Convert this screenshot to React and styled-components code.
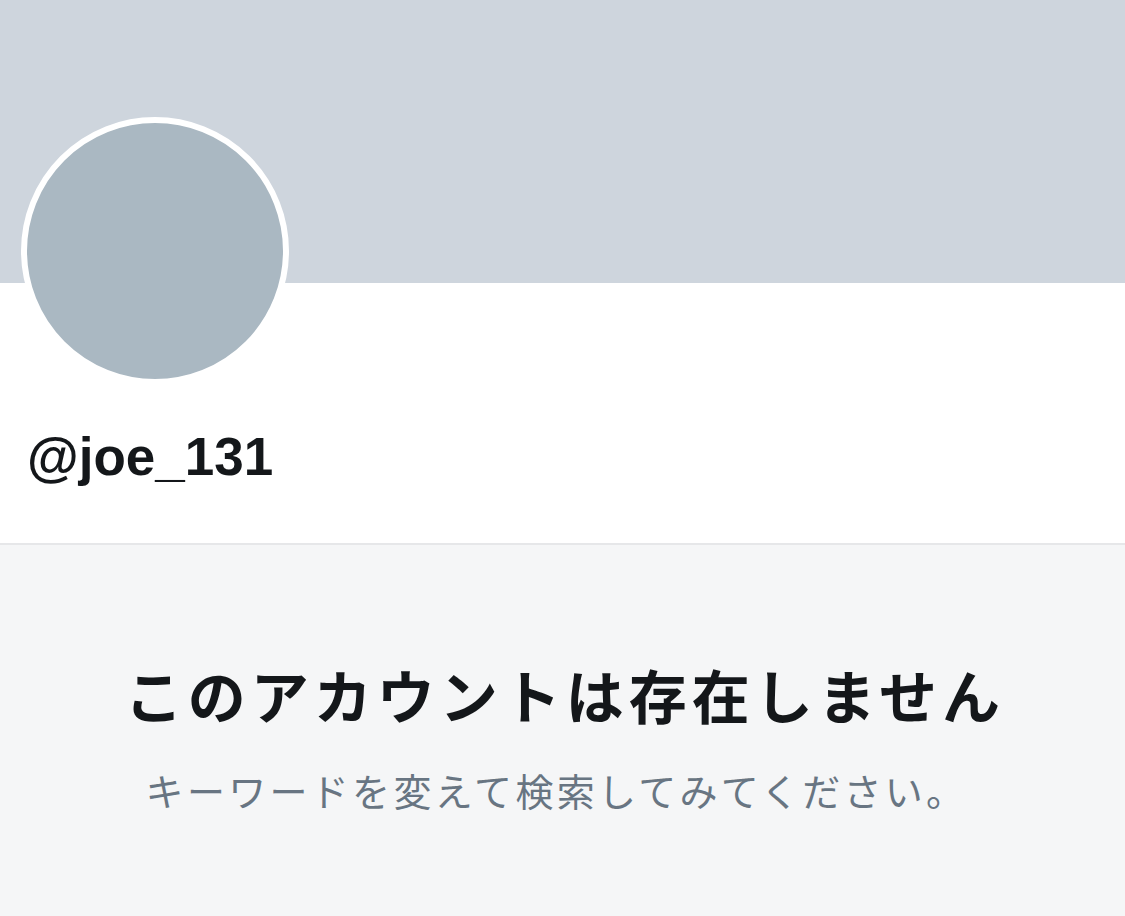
import React from "react";
import styled, { createGlobalStyle } from "styled-components";

const GlobalStyle = createGlobalStyle`
    html, body {
        margin: 0;
        padding: 0;
        background: #F5F6F7;
    }
    body {
        font-family: "Liberation Sans", "Noto Sans CJK JP", sans-serif;
        color: #14171A;
    }
`;

const StyledPage = styled.div`
    display: flex;
    flex-direction: column;
    width: 100%;
    min-height: 916px;
    background: #F5F6F7;
`;

const StyledHeader = styled.div`
    display: flex;
    flex-direction: column;
    background: #FFFFFF;
    border-bottom: 2px solid #E6E7E9;
`;

const StyledBanner = styled.div`
    height: 283px;
    background: #CED5DD;
`;

const StyledAvatar = styled.div`
    width: 256px;
    height: 256px;
    margin-top: -166px;
    margin-left: 21px;
    border: 6px solid #FFFFFF;
    border-radius: 50%;
    background: #AAB8C2;
`;

const StyledHandle = styled.h1`
    margin: 40px 0 0 27px;
    padding-bottom: 54px;
    font-family: "Liberation Sans", Arial, sans-serif;
    font-weight: bold;
    font-size: 53px;
    line-height: 64px;
    color: #14171A;
`;

const StyledEmpty = styled.div`
    display: flex;
    flex-direction: column;
    align-items: center;
    padding-top: 113px;
    text-align: center;
`;

const StyledTitle = styled.h2`
    margin: 0;
    padding-left: 5px;
    font-family: "Noto Sans CJK JP", sans-serif;
    font-weight: bold;
    font-size: 58px;
    line-height: 72px;
    letter-spacing: 5px;
    color: #14171A;
`;

const StyledSubtitle = styled.p`
    margin: 36px 0 0;
    padding-right: 12px;
    font-family: "Noto Sans CJK JP", sans-serif;
    font-weight: normal;
    font-size: 38px;
    line-height: 48px;
    letter-spacing: 3.3px;
    color: #687582;
`;

const App = () => {
    return (
        <StyledPage>
            <GlobalStyle />
            <StyledHeader>
                <StyledBanner />
                <StyledAvatar />
                <StyledHandle>@joe_131</StyledHandle>
            </StyledHeader>
            <StyledEmpty>
                <StyledTitle>このアカウントは存在しません</StyledTitle>
                <StyledSubtitle>キーワードを変えて検索してみてください。</StyledSubtitle>
            </StyledEmpty>
        </StyledPage>
    );
};

export default App;
